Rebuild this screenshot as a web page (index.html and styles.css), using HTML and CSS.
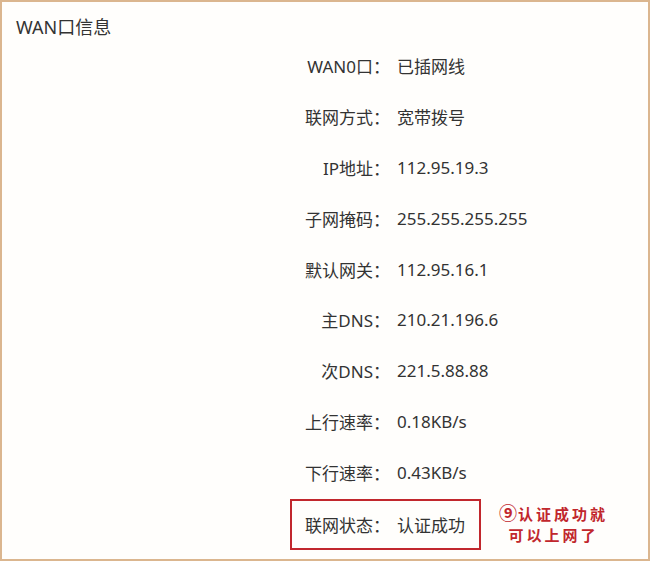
FILE: index.html
```html
<!DOCTYPE html>
<html lang="zh-CN">
<head>
<meta charset="utf-8">
<title>WAN口信息</title>
<link rel="stylesheet" href="styles.css">
</head>
<body>
<div class="frame">
  <div class="title">WAN口信息</div>
  <div class="list">
    <div class="row"><span class="label">WAN0口：</span><span class="value">已插网线</span></div>
    <div class="row"><span class="label">联网方式：</span><span class="value">宽带拨号</span></div>
    <div class="row"><span class="label">IP地址：</span><span class="value">112.95.19.3</span></div>
    <div class="row"><span class="label">子网掩码：</span><span class="value">255.255.255.255</span></div>
    <div class="row"><span class="label">默认网关：</span><span class="value">112.95.16.1</span></div>
    <div class="row"><span class="label">主DNS：</span><span class="value">210.21.196.6</span></div>
    <div class="row"><span class="label">次DNS：</span><span class="value">221.5.88.88</span></div>
    <div class="row"><span class="label">上行速率：</span><span class="value">0.18KB/s</span></div>
    <div class="row"><span class="label">下行速率：</span><span class="value">0.43KB/s</span></div>
    <div class="row last">
      <div class="highlight"><span class="label">联网状态：</span><span class="value">认证成功</span></div>
      <div class="note"><span class="num">⑨</span>认证成功就<br>可以上网了</div>
    </div>
  </div>
</div>
</body>
</html>
```

FILE: styles.css
```css
html, body {
  margin: 0;
  padding: 0;
  background: #ffffff;
}
body {
  font-family: "Noto Sans", "Noto Sans CJK SC", sans-serif;
  color: #333333;
}
.frame {
  width: 650px;
  height: 561px;
  box-sizing: border-box;
  border: 2px solid #dbb68f;
  background: #fffefc;
}
.title {
  font-size: 18px;
  line-height: 22px;
  padding: 14px 0 0 14px;
  height: 24px;
}
.list {
  display: flex;
  flex-direction: column;
  padding-left: 288px;
}
.row {
  display: flex;
  align-items: center;
  height: 50.9px;
  font-size: 17px;
  flex-shrink: 0;
}
.label {
  width: 100px;
  text-align: right;
  white-space: nowrap;
}
.value {
  margin-left: 7px;
  white-space: nowrap;
}
.row.last {
  margin-top: 1px;
}
.highlight {
  display: flex;
  align-items: center;
  box-sizing: border-box;
  height: 51px;
  width: 191px;
  border: 2px solid #c1272d;
}
.highlight .label {
  width: 98px;
}
.note {
  margin-left: 18px;
  font-family: "Noto Sans CJK SC", sans-serif;
  font-weight: 700;
  font-size: 15px;
  line-height: 21px;
  color: #c1272d;
  text-align: center;
  letter-spacing: 3px;
  margin-top: -2px;
}
.num {
  font-size: 18px;
  letter-spacing: 1px;
}
```
